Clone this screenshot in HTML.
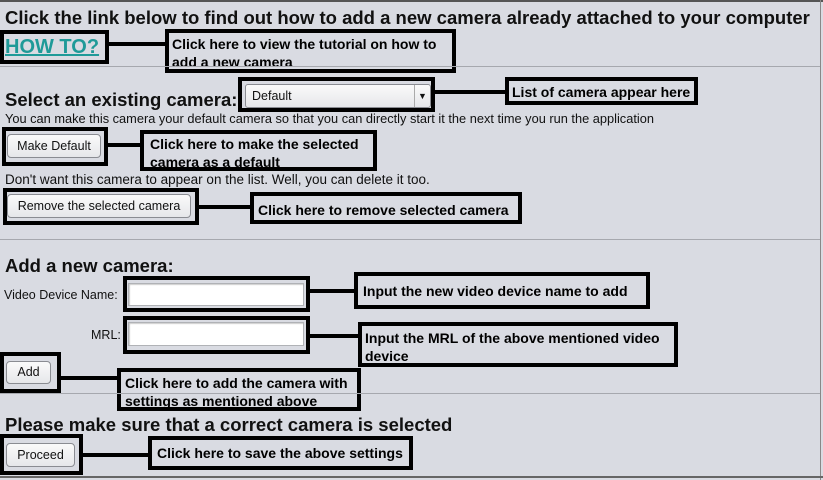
<!DOCTYPE html>
<html><head><meta charset="utf-8"><style>
*{margin:0;padding:0;box-sizing:border-box}
body{width:823px;height:480px;overflow:hidden;background:#d9dbe2;font-family:"Liberation Sans",Arial,sans-serif;position:relative;color:#111}
.a{position:absolute}
.bx{position:absolute;border:4px solid #000}
.cl{position:absolute;border:4px solid #000;font-weight:bold;font-size:14px;line-height:18px;padding:0 0 0 3px;color:#000;white-space:nowrap;overflow:hidden}
.ln{position:absolute;background:#000;height:4px}
.sep{position:absolute;left:0;width:820px;height:1px;background:#a6a8ae}
.btn{position:absolute;border:1px solid #8a8c92;border-radius:4px;background:linear-gradient(#fafafa,#e6e7ea);font-size:12.5px;text-align:center;color:#111}
.inp{position:absolute;background:#fff;border:1px solid #b0b2b6;box-shadow:inset 1px 1px 1px #ccc}
.h{position:absolute;font-weight:bold;white-space:nowrap}
.s{position:absolute;font-size:12.8px;white-space:nowrap}
</style></head><body>
<div class="a" style="left:0;top:0;width:823px;height:2px;background:#555"></div>
<div class="a" style="left:820px;top:0;width:1px;height:480px;background:#888"></div>
<div class="h" style="left:5px;top:7px;font-size:18.5px">Click the link below to find out how to add a new camera already attached to your computer</div>
<div class="bx" style="left:0;top:30px;width:109px;height:34px"></div>
<div class="h" style="left:5px;top:36px;font-size:20px;color:#1f9a98;text-decoration:underline">HOW TO?</div>
<div class="ln" style="left:108px;top:42px;width:58px"></div>
<div class="cl" style="left:165px;top:29px;width:291px;height:44px;padding-top:2px">Click here to view the tutorial on how to<br>add a new camera</div>
<div class="sep" style="top:66px"></div>

<div class="h" style="left:5px;top:89px;font-size:18.5px">Select an existing camera:</div>
<div class="bx" style="left:238px;top:77px;width:197px;height:35px"></div>
<div class="btn" style="left:245px;top:84px;width:186px;height:24px;text-align:left;padding:4px 0 0 6px;border-radius:3px">Default<span style="position:absolute;right:0;top:0;width:16px;height:22px;border-left:1px solid #aaa;font-size:9px;line-height:22px;text-align:center">▼</span></div>
<div class="ln" style="left:434px;top:90px;width:72px"></div>
<div class="cl" style="left:505px;top:77px;width:193px;height:28px;padding-top:2px">List of camera appear here</div>
<div class="s" style="left:5px;top:111px">You can make this camera your default camera so that you can directly start it the next time you run the application</div>

<div class="bx" style="left:2px;top:127px;width:106px;height:39px"></div>
<div class="btn" style="left:7px;top:134px;width:94px;height:24px;line-height:22px">Make Default</div>
<div class="ln" style="left:107px;top:143px;width:34px"></div>
<div class="cl" style="left:140px;top:130px;width:237px;height:41px;padding:1px 0 0 6px">Click here to make the selected<br>camera as a default</div>
<div class="s" style="left:5px;top:172px;font-size:13.5px">Don't want this camera to appear on the list. Well, you can delete it too.</div>

<div class="bx" style="left:3px;top:188px;width:196px;height:37px"></div>
<div class="btn" style="left:7px;top:194px;width:184px;height:24px;line-height:22px">Remove the selected camera</div>
<div class="ln" style="left:198px;top:205px;width:53px"></div>
<div class="cl" style="left:250px;top:192px;width:272px;height:32px;padding-top:5px;padding-left:4px">Click here to remove selected camera</div>
<div class="sep" style="top:239px"></div>

<div class="h" style="left:5px;top:255px;font-size:18.5px">Add a new camera:</div>
<div class="s" style="left:4px;top:288px;font-size:12.5px">Video Device Name:</div>
<div class="bx" style="left:123px;top:276px;width:187px;height:36px"></div>
<div class="inp" style="left:128px;top:283px;width:176px;height:23px"></div>
<div class="ln" style="left:309px;top:289px;width:46px"></div>
<div class="cl" style="left:354px;top:272px;width:296px;height:37px;padding-top:6px;padding-left:5px">Input the new video device name to add</div>
<div class="s" style="left:91px;top:328px;font-size:12.5px">MRL:</div>
<div class="bx" style="left:123px;top:316px;width:187px;height:38px"></div>
<div class="inp" style="left:128px;top:322px;width:176px;height:24px"></div>
<div class="ln" style="left:309px;top:334px;width:50px"></div>
<div class="cl" style="left:358px;top:322px;width:320px;height:45px;padding-top:3px">Input the MRL of the above mentioned video<br>device</div>

<div class="bx" style="left:0;top:352px;width:61px;height:41px"></div>
<div class="btn" style="left:6px;top:361px;width:45px;height:23px;line-height:21px">Add</div>
<div class="ln" style="left:60px;top:376px;width:58px"></div>
<div class="cl" style="left:117px;top:368px;width:244px;height:43px;padding-top:2px;padding-left:4px">Click here to add the camera with<br>settings as mentioned above</div>
<div class="sep" style="top:393px"></div>

<div class="h" style="left:5px;top:414px;font-size:18.5px">Please make sure that a correct camera is selected</div>
<div class="bx" style="left:0;top:434px;width:83px;height:41px"></div>
<div class="btn" style="left:6px;top:443px;width:69px;height:24px;line-height:22px">Proceed</div>
<div class="ln" style="left:82px;top:453px;width:67px"></div>
<div class="cl" style="left:148px;top:436px;width:265px;height:34px;padding-top:4px;padding-left:5px">Click here to save the above settings</div>
<div class="a" style="left:0;top:476px;width:823px;height:2px;background:#666"></div>
</body></html>
